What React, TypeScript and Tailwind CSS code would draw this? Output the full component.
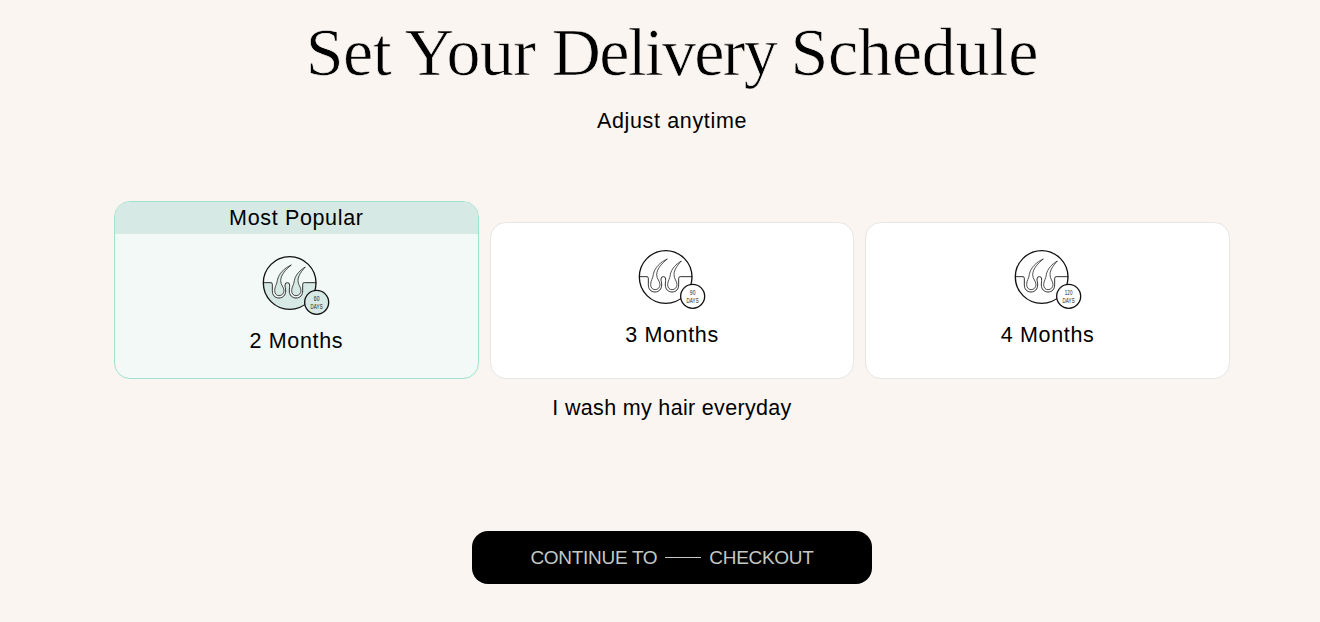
import React from 'react';

type PlanType = {
  months: number;
  days: number;
  popular?: boolean;
};

const plans: PlanType[] = [
  { months: 2, days: 60, popular: true },
  { months: 3, days: 90 },
  { months: 4, days: 120 },
];

function FollicleIcon({ days, tinted }: { days: number; tinted?: boolean }) {
  const fill = tinted ? '#d7e9e4' : '#ffffff';
  const inner = tinted ? '#f3f9f7' : '#ffffff';

  return (
    <svg width="68" height="60" viewBox="19 14 204 180" fill="none" stroke="#111" strokeWidth="2.6">
      <circle cx="102" cy="98" r="79" fill={inner} stroke="none" />
      <path d="M23 97A79 79 0 0 0 181 97Z" fill={fill} stroke="none" />
      <path
        d="M22 97H46Q50 97 50 102V121C50 134 57 143 70 143C82 143 90 134 90 122C90 114 88 110 88 104Q88 97 95 97Q102 97 102 104C102 110 101 114 101 122C101 134 109 143 121 143C134 143 141 134 141 121V102Q141 97 146 97H182"
        fill={inner}
      />
      <path
        d="M107 44C86 53 69 70 65 90C64 103 57 108 57 120C57 130 62 136 70 136C79 136 85 129 85 121C85 110 75 104 75 91C76 72 91 57 107 44Z"
        fill={fill}
        strokeWidth="2.2"
      />
      <path
        d="M149 50C134 59 119 73 116 91C115 104 108 109 108 121C108 130 113 136 121 136C130 136 136 129 136 121C136 110 127 104 127 91C127 76 138 62 149 50Z"
        fill={fill}
        strokeWidth="2.2"
      />
      <circle cx="102" cy="98" r="79" strokeWidth="4" />
      <circle cx="183" cy="156" r="36" fill={fill} strokeWidth="4" />
      <g fill="#222" stroke="none" textAnchor="middle" fontFamily="Liberation Sans, sans-serif" fontSize="19">
        <text x="183" y="152" textLength={days > 99 ? 24 : 18} lengthAdjust="spacingAndGlyphs">
          {days}
        </text>
        <text x="183" y="176" textLength="37" lengthAdjust="spacingAndGlyphs">
          DAYS
        </text>
      </g>
    </svg>
  );
}

function PlanCard({ plan }: { plan: PlanType }) {
  if (plan.popular) {
    return (
      <div className="flex h-[178px] flex-col items-center overflow-hidden rounded-2xl border border-[#9fe3cf] bg-[#f3f9f7]">
        <div className="h-8 w-full bg-[#d7e9e4] text-center leading-8">Most Popular</div>
        <div className="mt-[21px]">
          <FollicleIcon days={plan.days} tinted />
        </div>
        <div className="mt-[10px] leading-8">{plan.months} Months</div>
      </div>
    );
  }

  return (
    <div className="flex h-[157px] flex-col items-center rounded-2xl border border-[#e6e6e4] bg-white pt-[26px]">
      <FollicleIcon days={plan.days} />
      <div className="mt-[10px] leading-8">{plan.months} Months</div>
    </div>
  );
}

function App() {
  return (
    <div className="h-[622px] overflow-hidden bg-[#faf5f1] pl-6 font-['Liberation_Sans',Arial,sans-serif] text-[21.5px] tracking-[0.65px] text-black">
      <div className="mx-auto flex w-[1116px] flex-col items-center">
        <h1 className="mt-3 whitespace-nowrap font-['Liberation_Serif',serif] text-[68px] leading-[80px] tracking-[-0.6px] [-webkit-text-stroke:0.7px_#faf5f1]">
          Set Your <span className="tracking-[-1.7px]">Delivery</span>{' '}
          <span className="-ml-[2px] tracking-[-0.2px]">Schedule</span>
        </h1>
        <p className="mt-[13px] leading-8">Adjust anytime</p>
        <div className="mt-16 grid w-full grid-cols-3 items-end gap-[11px]">
          {plans.map((plan) => (
            <PlanCard key={plan.months} plan={plan} />
          ))}
        </div>
        <p className="mt-[13px] leading-8 tracking-[0.33px]">I wash my hair everyday</p>
        <button className="mt-[107px] flex h-[53px] w-[400px] items-center justify-center gap-2 rounded-2xl bg-black text-[19px] tracking-[-0.3px] text-[#c4c8c6]">
          <span className="pt-0.5">CONTINUE TO</span>
          <span className="h-px w-9 bg-[#c4c8c6]" />
          <span className="pt-0.5">CHECKOUT</span>
        </button>
      </div>
    </div>
  );
}

export default App;
